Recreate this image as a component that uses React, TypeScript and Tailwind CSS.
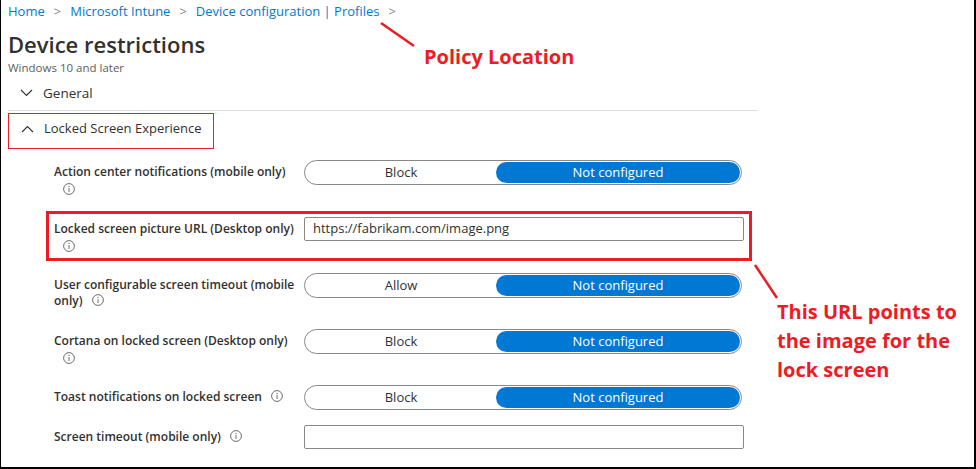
import { ReactNode } from 'react';

const FONT = { fontFamily: '"Open Sans", "Noto Sans", sans-serif' };
const CALLOUT = { fontFamily: '"Open Sans", "Liberation Sans", sans-serif' };

function InfoIcon({ className = '' }: { className?: string }) {
  return (
    <svg className={`inline-block ${className}`} width="12" height="12" viewBox="0 0 12 12" fill="none">
      <circle cx="6" cy="6" r="5.4" stroke="#605e5c" strokeWidth="0.9" />
      <line x1="6" y1="5" x2="6" y2="9" stroke="#605e5c" strokeWidth="0.9" />
      <circle cx="6" cy="3.4" r="0.6" fill="#605e5c" />
    </svg>
  );
}

function Chevron({ up = false }: { up?: boolean }) {
  return (
    <svg width="13" height="8" viewBox="0 0 13 8" fill="none">
      <polyline
        points={up ? '1,7 6.5,1.5 12,7' : '1,1 6.5,6.5 12,1'}
        stroke="#323130"
        strokeWidth="1.1"
      />
    </svg>
  );
}

function Toggle({ left }: { left: string }) {
  return (
    <div className="w-[438px] h-[25px] rounded-full border border-[#8a8886] flex items-center p-[1px] text-[13px]">
      <div className="flex-1 text-center text-[#323130]">{left}</div>
      <div className="w-[244px] h-[21px] rounded-full bg-[#0078d4] text-white flex items-center justify-center">
        Not configured
      </div>
    </div>
  );
}

function TextBox({ value = '' }: { value?: string }) {
  return (
    <div className="w-[440px] h-[24px] border border-[#8a8886] rounded-[2px] flex items-center px-2 text-[13px] text-[#323130]">
      {value}
    </div>
  );
}

function Row({ label, control, height }: { label: ReactNode; control: ReactNode; height: string }) {
  return (
    <div className={`flex items-start ${height}`}>
      <div className="w-[250px] shrink-0 pt-[4px] text-[12px] leading-[16px] font-semibold text-[#323130]">{label}</div>
      {control}
    </div>
  );
}

export default function App() {
  return (
    <div
      className="relative w-[976px] h-[469px] bg-white border-l border-r-2 border-b-2 border-black overflow-hidden"
      style={FONT}
    >
      <div className="pl-[7px]">
        <div className="h-[22px] leading-[22px] text-[13px] flex items-center gap-[9px]">
          <span className="text-[#0078d4]">Home</span>
          <span className="text-[#8a8886]">&gt;</span>
          <span className="text-[#0078d4]">Microsoft Intune</span>
          <span className="text-[#8a8886]">&gt;</span>
          <span className="text-[#0078d4]">Device configuration | Profiles</span>
          <span className="text-[#8a8886]">&gt;</span>
        </div>
        <h1 className="mt-[7px] text-[22px] leading-[30px] font-semibold text-[#323130]">Device restrictions</h1>
        <div className="mt-[1px] text-[11.5px] leading-[16px] text-[#605e5c]">Windows 10 and later</div>

        <div className="mt-[7px] h-[20px] flex items-center pl-[12px] gap-[10px] text-[13.5px] text-[#323130]">
          <Chevron />
          <span>General</span>
        </div>
        <div className="mt-[7px] w-[750px] border-b border-[#e1dfdd]" />

        <div className="mt-[2px] w-[206px] h-[36px] border border-[#ed1c24] flex items-start pt-[5px] pl-[12px] gap-[10px] text-[13px] text-[#323130]">
          <span className="mt-[6px]">
            <Chevron up />
          </span>
          <span>Locked Screen Experience</span>
        </div>

        <div className="mt-[11px] pl-[46px]">
          <Row
            height="h-[57px]"
            label={
              <>
                Action center notifications (mobile only)
                <br />
                <InfoIcon className="ml-[9px] mt-[1px]" />
              </>
            }
            control={<Toggle left="Block" />}
          />
          <div className="relative">
            <span className="absolute -left-[8px] -top-[6px] w-[706px] h-[50px] border-[3px] border-[#ed1c24]" />
            <Row
              height="h-[56px]"
              label={
                <>
                  Locked screen picture URL (Desktop only)
                  <br />
                  <InfoIcon className="ml-[9px] mt-[1px]" />
                </>
              }
              control={<TextBox value="https://fabrikam.com/image.png" />}
            />
          </div>
          <Row
            height="h-[56px]"
            label={
              <>
                User configurable screen timeout (mobile only) <InfoIcon className="ml-[6px] align-[-1px]" />
              </>
            }
            control={<Toggle left="Allow" />}
          />
          <Row
            height="h-[56px]"
            label={
              <>
                Cortana on locked screen (Desktop only)
                <br />
                <InfoIcon className="ml-[9px] mt-[1px]" />
              </>
            }
            control={<Toggle left="Block" />}
          />
          <Row
            height="h-[40px]"
            label={
              <>
                Toast notifications on locked screen <InfoIcon className="ml-[6px] align-[-1px]" />
              </>
            }
            control={<Toggle left="Block" />}
          />
          <Row
            height="h-[40px]"
            label={
              <>
                Screen timeout (mobile only) <InfoIcon className="ml-[6px] align-[-1px]" />
              </>
            }
            control={<TextBox />}
          />
        </div>
      </div>

      <svg className="absolute left-0 top-0 pointer-events-none" width="976" height="469">
        <line x1="380" y1="23" x2="413" y2="46" stroke="#ed1c24" strokeWidth="2.5" />
        <line x1="754" y1="265" x2="776" y2="298" stroke="#ed1c24" strokeWidth="2.5" />
      </svg>
      <div
        className="absolute left-[423px] top-[43px] text-[20px] leading-[28px] font-bold text-[#ed1c24]"
        style={CALLOUT}
      >
        Policy Location
      </div>
      <div
        className="absolute left-[776px] top-[297px] w-[190px] text-[20px] leading-[29px] font-bold text-[#ed1c24]"
        style={CALLOUT}
      >
        This URL points to
        <br />
        the image for the
        <br />
        lock screen
      </div>
    </div>
  );
}
